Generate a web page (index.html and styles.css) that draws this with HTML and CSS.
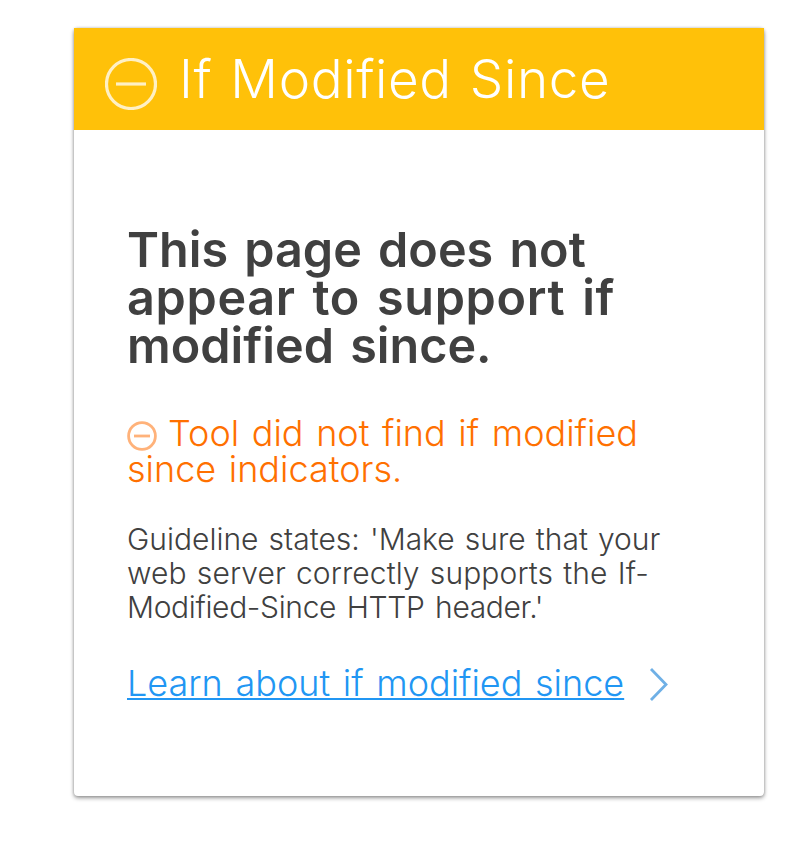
FILE: index.html
```html
<!DOCTYPE html>
<html lang="en">
<head>
<meta charset="utf-8">
<title>If Modified Since</title>
<link rel="stylesheet" href="styles.css">
</head>
<body>
<article class="card">
  <header class="card-header">
    <svg class="header-icon" viewBox="0 0 52 52"><circle cx="26" cy="26" r="24.5"/><path d="M11 26H41"/></svg>
    <h1>If Modified Since</h1>
  </header>
  <div class="card-body">
    <h2>This page does not<br><span class="loose">appear to support if</span><br>modified since.</h2>
    <p class="warning"><svg class="warning-icon" viewBox="0 0 30 30"><circle cx="15" cy="15" r="13.4"/><path d="M7 15H23"/></svg>Tool did not find if modified<br>since indicators.</p>
    <p class="guideline">Guideline states: 'Make sure that your<br><span class="open">web server correctly supports the If-</span><br><span class="tight">Modified-Since HTTP header.'</span></p>
    <div class="learn"><a href="#">Learn about if modified since</a><svg class="chevron" viewBox="0 0 20 36"><path d="M2 2L17 17.5L2 33"/></svg></div>
  </div>
</article>
</body>
</html>
```
FILE: styles.css
```css
* { box-sizing: border-box; }
body { margin: 0; min-height: 852px; padding: 28px 44px 0 74px; background: #fff; font-family: Inter, "Liberation Sans", sans-serif; font-weight: 300; white-space: nowrap; }
h1, h2, p { margin: 0; }
svg { flex: none; fill: none; }
.card { height: 768px; background: #fff; border-radius: 4px; box-shadow: 0 2px 4px #0006, 0 0 3px #0003; }
.card-header { display: flex; height: 102px; padding-left: 31px; background: #ffc109; }
.header-icon { width: 52px; height: 52px; margin: 30px 22px 0 0; stroke: #fff0c4; stroke-width: 3.2; }
h1 { color: #fff; font-size: 53px; font-weight: 300; line-height: 102px; letter-spacing: 0.6px; word-spacing: 2.5px; }
.card-body { padding: 96px 0 0 53px; }
h2 { color: #404040; font-size: 48.5px; font-weight: 600; line-height: 48px; word-spacing: 4px; }
.loose { letter-spacing: 0.67px; }
.warning { margin-top: 45px; color: #ff7000; font-size: 36px; line-height: 36px; word-spacing: 2.5px; }
.warning-icon { width: 30px; height: 30px; margin-right: 11px; vertical-align: -5px; stroke: #ffb27a; stroke-width: 2.8; }
.guideline { margin-top: 35px; color: #404040; font-size: 30px; line-height: 34px; word-spacing: 1.7px; }
.open { letter-spacing: 0.09px; }
.tight { letter-spacing: -0.35px; word-spacing: 2.5px; }
.learn { display: flex; margin-top: 41px; font-size: 36px; line-height: 36px; word-spacing: 2.5px; }
.learn a { color: #2196f3; text-decoration: underline; text-decoration-thickness: 2px; text-underline-offset: 2px; text-decoration-skip-ink: none; }
.chevron { width: 20px; height: 36px; margin: 2px 0 0 25px; stroke: #6fb0e6; stroke-width: 2.8; }
```
